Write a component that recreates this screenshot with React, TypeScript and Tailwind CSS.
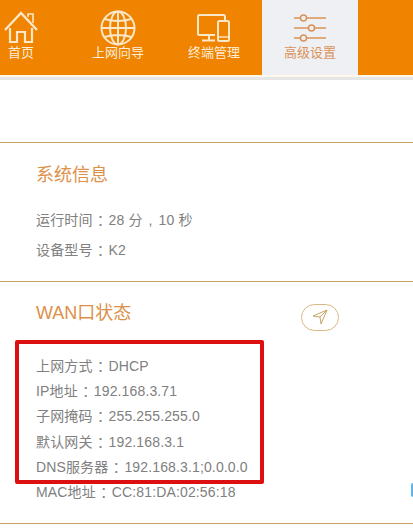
const CJK = "font-['Liberation_Sans','Noto_Sans_CJK_SC',sans-serif]";
const PUNCT = "font-['Noto_Sans_CJK_TC',sans-serif]";

function NavItem({ label, width, active, children }: { label: string; width: string; active?: boolean; children: React.ReactNode }) {
  return (
    <div className={`${width} h-full shrink-0 flex flex-col items-center pt-[11px] ${active ? 'bg-[#eff0f4] text-[#d9935a]' : 'text-[#fdeed8]'}`}>
      <div className="h-[34px] flex items-center justify-center">{children}</div>
      <div className="text-[13px] leading-[16px] whitespace-nowrap">{label}</div>
    </div>
  );
}

function Row({ children, h }: { children: React.ReactNode; h: string }) {
  return <div className={`${h} flex items-center whitespace-pre tracking-[0.14px]`}>{children}</div>;
}

function Colon() {
  return <span className={`${PUNCT} w-[16px] text-center`}>：</span>;
}

export default function App() {
  return (
    <div className={`w-[413px] h-[528px] bg-white overflow-hidden relative ${CJK}`}>
      <div className="h-[75px] bg-[#f08300] flex">
        <NavItem label="首页" width="w-[42px]">
          <svg width="36" height="34" viewBox="0 0 36 34" fill="none" stroke="#fbe8c8" strokeWidth="2">
            <path d="M2 19 L18 2 L34 19" strokeWidth="2.4" />
            <path d="M25 6 V3 H30 V12" strokeWidth="1.6" />
            <path d="M7 17 V31 H14 V21 H22 V31 H29 V17" strokeWidth="2.2" />
          </svg>
        </NavItem>
        <div className="w-[34px] shrink-0" />
        <NavItem label="上网向导" width="w-[84px]">
          <svg width="36" height="36" viewBox="0 0 36 36" fill="none" stroke="#fbe8c8" strokeWidth="2">
            <circle cx="18" cy="18" r="16.5" />
            <ellipse cx="18" cy="18" rx="8" ry="16.5" />
            <path d="M18 1.5 V34.5 M1.5 18 H34.5 M4.5 9 Q18 13 31.5 9 M4.5 27 Q18 23 31.5 27" />
          </svg>
        </NavItem>
        <div className="w-[12px] shrink-0" />
        <NavItem label="终端管理" width="w-[84px]">
          <svg width="34" height="28" viewBox="0 0 34 28" fill="none" stroke="#fbe8c8" strokeWidth="2">
            <path d="M18 21 H2.5 Q1 21 1 19.5 V2.5 Q1 1 2.5 1 H26.5 Q28 1 28 2.5 V6" />
            <path d="M12 21 V26 M5 26.5 H18" />
            <rect x="21" y="7" width="11" height="20" rx="1.5" />
            <path d="M21 23 H32" strokeWidth="1.4" />
          </svg>
        </NavItem>
        <div className="w-[6px] shrink-0" />
        <NavItem label="高级设置" width="w-[96px]" active>
          <svg width="34" height="28" viewBox="0 0 34 28" fill="none" stroke="#d9935a" strokeWidth="1.5">
            <path d="M1 4 H7 M14 4 H33" />
            <circle cx="10.5" cy="4" r="3" />
            <path d="M1 14 H15 M22 14 H33" />
            <circle cx="18.5" cy="14" r="3" />
            <path d="M1 24 H7 M14 24 H33" />
            <circle cx="10.5" cy="24" r="3" />
          </svg>
        </NavItem>
      </div>
      <div className="h-[2px] bg-[#fff8ea]" />
      <div className="h-[3px] bg-[#e6e6e6]" />

      <div className="h-[62px]" />

      <section className="h-[139px] border-t border-[#c8a468] pl-[36px] text-[14px] text-[#808080]">
        <div className="text-[18px] leading-[24px] text-[#dc9049] mt-[20px] mb-[18px]">系统信息</div>
        <Row h="h-[30px]">运行时间<Colon />28 分<span className="w-[16px] text-center">,</span>10 秒</Row>
        <Row h="h-[30px]">设备型号<Colon />K2</Row>
      </section>

      <section className="h-[243px] border-t border-b border-[#c8a468] pl-[36px] text-[14px] text-[#808080] relative">
        <div className="flex items-center h-[24px] mt-[19px] mb-[29px]">
          <div className="text-[18px] leading-[24px] text-[#dc9049] w-[265px]">WAN口状态</div>
          <div className="w-[38px] h-[27px] mt-[8px] rounded-[14px] border border-[#d8b880] flex items-center justify-center">
            <svg width="16" height="16" viewBox="0 0 16 16" fill="none" stroke="#c8a468" strokeWidth="1">
              <path d="M15 1 L1 7 L8 8 L9 15 Z" strokeLinejoin="round" />
              <path d="M8 8 L15 1" />
            </svg>
          </div>
        </div>
        <Row h="h-[25.2px]">上网方式<Colon />DHCP</Row>
        <Row h="h-[25.2px]">IP地址<Colon />192.168.3.71</Row>
        <Row h="h-[25.2px]">子网掩码<Colon />255.255.255.0</Row>
        <Row h="h-[25.2px]">默认网关<Colon />192.168.3.1</Row>
        <Row h="h-[25.2px]">DNS服务器<Colon />192.168.3.1;0.0.0.0</Row>
        <Row h="h-[25.2px]">MAC地址<Colon />CC:81:DA:02:56:18</Row>
        <div className="absolute left-[15px] top-[58px] w-[249px] h-[144px] border-[4px] border-[#dc1010] rounded-[2px]" />
      </section>

      <div className="absolute right-0 top-[483px] w-[2px] h-[14px] bg-[#5fb4ee] rounded-l-full" />
    </div>
  );
}
